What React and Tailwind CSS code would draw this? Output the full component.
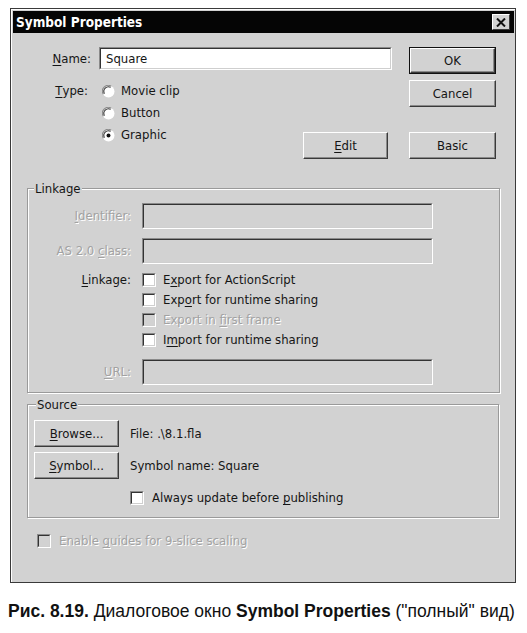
import React from 'react';

const face = { fontFamily: '"DejaVu Sans Condensed", "DejaVu Sans", sans-serif' };

const U = ({ children }) => <span className="underline underline-offset-2">{children}</span>;

const Btn = ({ children, def, className = '' }) => (
  <div className={`${def ? 'border border-[#111]' : ''} ${className}`}>
    <div className="h-full flex items-center justify-center bg-[#d2d2d2] border border-t-white border-l-white border-r-[#3a3a3a] border-b-[#3a3a3a] shadow-[inset_-1px_-1px_0_#8a8a8a] text-[13px] text-[#151515]">
      {children}
    </div>
  </div>
);

const Field = ({ children, className = '', disabled }) => (
  <div className={`border border-t-[#8a8a8a] border-l-[#8a8a8a] border-r-white border-b-white ${className}`}>
    <div className={`h-full border border-t-[#333] border-l-[#333] border-r-[#cfcfcf] border-b-[#cfcfcf] ${disabled ? 'bg-[#d2d2d2]' : 'bg-white'} flex items-center px-[5px] text-[13px] text-[#151515]`}>
      {children}
    </div>
  </div>
);

const Check = ({ disabled }) => (
  <div className="w-[14px] h-[14px] border border-t-[#8a8a8a] border-l-[#8a8a8a] border-r-white border-b-white shrink-0">
    <div className={`w-full h-full border border-t-[#333] border-l-[#333] border-r-[#cfcfcf] border-b-[#cfcfcf] ${disabled ? 'bg-[#d2d2d2]' : 'bg-white'}`} />
  </div>
);

const Radio = ({ checked }) => (
  <svg width="13" height="13" viewBox="0 0 12 12" className="shrink-0">
    <circle cx="6" cy="6" r="5.5" fill="#fff" />
    <path d="M1.2 8.5 A5.3 5.3 0 0 1 8.5 1.2" stroke="#8a8a8a" strokeWidth="1" fill="none" />
    <path d="M2.2 8 A4.3 4.3 0 0 1 8 2.2" stroke="#333" strokeWidth="1" fill="none" />
    {checked && <circle cx="6" cy="6" r="1.8" fill="#111" />}
  </svg>
);

const dis = 'text-[#a2a2a2] [text-shadow:1px_1px_0_#fff]';

const App = () => {
  return (
    <div className="bg-white w-[527px] h-[633px] pt-[8px] pl-[10px]" style={face}>
      <div className="w-[506px] h-[575px] border border-[#3a3a3a] bg-[#d2d2d2] flex flex-col">
        <div className="border-t border-l border-white flex-1 flex flex-col">
          <div className="mx-[1px] mt-[1px] h-[22px] bg-[#050505] flex items-center pl-[3px] pr-[4px]">
            <span className="text-white font-bold text-[13.5px]">Symbol Properties</span>
            <div className="ml-auto w-[18px] h-[16px] bg-[#d2d2d2] border border-t-white border-l-white border-r-[#3a3a3a] border-b-[#3a3a3a] flex items-center justify-center">
              <svg width="10" height="9" viewBox="0 0 10 9">
                <path d="M1 0.5 L9 8.5 M9 0.5 L1 8.5" stroke="#111" strokeWidth="2" />
              </svg>
            </div>
          </div>

          <div className="flex pt-[14px]">
            <div className="w-[397px] flex flex-col">
              <div className="flex items-center h-[23px]">
                <div className="w-[79px] text-right text-[13px] text-[#151515]">
                  <U>N</U>ame:
                </div>
                <Field className="ml-[8px] w-[293px] h-[23px]">Square</Field>
              </div>
              <div className="flex mt-[10px]">
                <div className="w-[76px] h-[22px] flex items-center justify-end text-[13px] text-[#151515]">
                  <U>T</U>ype:
                </div>
                <div className="ml-[14px] flex flex-col">
                  {['Movie clip', 'Button', 'Graphic'].map((t, i) => (
                    <div key={t} className="flex items-center h-[22px] gap-[6px] text-[13px] text-[#151515]">
                      <Radio checked={i === 2} />
                      {t}
                    </div>
                  ))}
                </div>
                <Btn className="ml-auto mr-[21px] mt-[52px] w-[85px] h-[27px]">
                  <U>E</U>dit
                </Btn>
              </div>
            </div>
            <div className="w-[87px] flex flex-col">
              <Btn def className="h-[27px]">OK</Btn>
              <Btn className="mt-[6px] h-[27px]">Cancel</Btn>
              <Btn className="mt-[25px] h-[27px]">Basic</Btn>
            </div>
          </div>

          <fieldset className="mt-[22px] ml-[15px] w-[473px] border border-[#9a9a9a] shadow-[inset_1px_1px_0_#fff,1px_1px_0_#fff] pb-[7px]">
            <legend className="ml-[6px] px-[1px] bg-[#d2d2d2] text-[13px] leading-[15px] text-[#151515]">Linkage</legend>
            <div className="pt-[7px] flex flex-col">
              <div className="flex items-center">
                <div className={`w-[103px] text-right text-[13px] ${dis}`}>
                  <U>I</U>dentifier:
                </div>
                <Field disabled className="ml-[11px] w-[291px] h-[26px]" />
              </div>
              <div className="flex items-center mt-[9px]">
                <div className={`w-[103px] text-right text-[13px] ${dis}`}>
                  AS 2.0 <U>c</U>lass:
                </div>
                <Field disabled className="ml-[11px] w-[291px] h-[26px]" />
              </div>
              <div className="flex mt-[6px]">
                <div className="w-[103px] h-[20px] flex items-center justify-end text-[13px] text-[#151515]">
                  <U>L</U>inkage:
                </div>
                <div className="ml-[11px] flex flex-col text-[13px]">
                  <div className="flex items-center h-[20px] gap-[7px] text-[#151515]">
                    <Check />
                    <span>E<U>x</U>port for ActionScript</span>
                  </div>
                  <div className="flex items-center h-[20px] gap-[7px] text-[#151515]">
                    <Check />
                    <span>Exp<U>o</U>rt for runtime sharing</span>
                  </div>
                  <div className="flex items-center h-[20px] gap-[7px]">
                    <Check disabled />
                    <span className={dis}>Export in <U>f</U>irst frame</span>
                  </div>
                  <div className="flex items-center h-[20px] gap-[7px] text-[#151515]">
                    <Check />
                    <span>I<U>m</U>port for runtime sharing</span>
                  </div>
                </div>
              </div>
              <div className="flex items-center mt-[9px]">
                <div className={`w-[103px] text-right text-[13px] ${dis}`}>
                  <U>U</U>RL:
                </div>
                <Field disabled className="ml-[11px] w-[291px] h-[26px]" />
              </div>
            </div>
          </fieldset>

          <fieldset className="mt-[4px] ml-[15px] w-[472px] border border-[#9a9a9a] shadow-[inset_1px_1px_0_#fff,1px_1px_0_#fff] pb-[9px]">
            <legend className="ml-[8px] px-[1px] bg-[#d2d2d2] text-[13px] leading-[15px] text-[#151515]">Source</legend>
            <div className="pt-[8px] pl-[6px] flex flex-col text-[13px] text-[#151515]">
              <div className="flex items-center">
                <Btn className="w-[85px] h-[27px]">
                  <span><U>B</U>rowse...</span>
                </Btn>
                <span className="ml-[11px]">File: .\8.1.fla</span>
              </div>
              <div className="flex items-center mt-[5px]">
                <Btn className="w-[85px] h-[27px]">
                  <span><U>S</U>ymbol...</span>
                </Btn>
                <span className="ml-[11px]">Symbol name: Square</span>
              </div>
              <div className="flex items-center h-[20px] mt-[9px] ml-[96px] gap-[8px]">
                <Check />
                <span>Always update before <U>p</U>ublishing</span>
              </div>
            </div>
          </fieldset>

          <div className="flex items-center h-[20px] mt-[13px] ml-[25px] gap-[8px] text-[13px]">
            <Check disabled />
            <span className={dis}>Enable <U>g</U>uides for 9-slice scaling</span>
          </div>
        </div>
      </div>

      <p className="mt-[16px] -ml-[2px] text-[17.5px] leading-[24px] text-[#111] whitespace-nowrap" style={{ fontFamily: '"Liberation Sans", Arial, sans-serif' }}>
        <b>Рис. 8.19.</b> Диалоговое окно <b>Symbol Properties</b> ("полный" вид)
      </p>
    </div>
  );
};

export default App;
